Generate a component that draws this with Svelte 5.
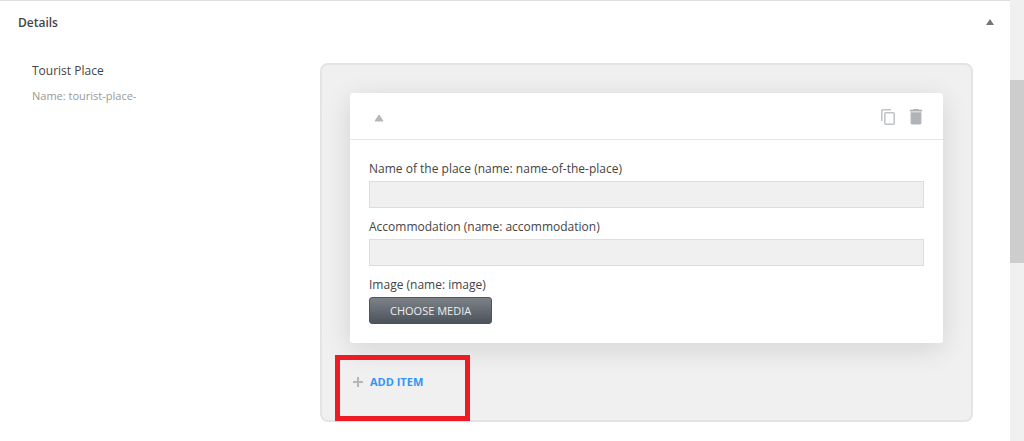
<script>
  let detailsOpen = $state(true);
  let itemOpen = $state(true);

  const fields = [
    { id: 'name-of-the-place', label: 'Name of the place' },
    { id: 'accommodation', label: 'Accommodation' },
  ];
</script>

<div class="page">
  <main>
    <header class="section-header">
      <h2>Details</h2>
      <button class="icon-button" aria-label="Toggle details" onclick={() => (detailsOpen = !detailsOpen)}>
        <svg width="10" height="10" viewBox="0 0 10 10"><path d="M5 2 L9 8 H1 Z" fill="#72777c" /></svg>
      </button>
    </header>

    {#if detailsOpen}
      <section class="row">
        <div class="info">
          <h3>Tourist Place</h3>
          <p>Name: tourist-place-</p>
        </div>

        <div class="repeater">
          <div class="card">
            <div class="card-header">
              <button class="icon-button" aria-label="Toggle item" onclick={() => (itemOpen = !itemOpen)}>
                <svg width="20" height="20" viewBox="0 0 20 20"><path d="M10 8 L14 14 H6 Z" fill="#b4b7ba" stroke="#b4b7ba" stroke-linejoin="round" /></svg>
              </button>
              <div class="actions">
                <button class="icon-button" aria-label="Duplicate item">
                  <svg width="16" height="18" viewBox="0 0 16 18" fill="none" stroke="#bfc3c6" stroke-width="1.5">
                    <path d="M11 1.8 H3 Q1.8 1.8 1.8 3 V13" />
                    <rect x="4.8" y="4.8" width="9.4" height="11.4" rx="1" />
                  </svg>
                </button>
                <button class="icon-button" aria-label="Delete item">
                  <svg width="16" height="18" viewBox="0 0 16 18" fill="#b0b4b8">
                    <path d="M5.5 1 H10.5 L11.3 1.8 H14.2 V3.4 H1.8 V1.8 H4.7 Z" />
                    <path d="M2.6 4.2 H13.4 V15 Q13.4 16.5 11.9 16.5 H4.1 Q2.6 16.5 2.6 15 Z" />
                  </svg>
                </button>
              </div>
            </div>

            {#if itemOpen}
              <div class="card-body">
                {#each fields as field}
                  <div class="field">
                    <label for={field.id}>{field.label} (name: {field.id})</label>
                    <input id={field.id} type="text" />
                  </div>
                {/each}
                <div class="field">
                  <label for="image">Image (name: image)</label>
                  <button id="image" class="media">CHOOSE MEDIA</button>
                </div>
              </div>
            {/if}
          </div>

          <div class="footer">
            <button class="add">
              <svg width="10" height="10" viewBox="0 0 10 10"><path d="M5 0 V10 M0 5 H10" stroke="#b4b7ba" stroke-width="2" /></svg>
              ADD ITEM
            </button>
            <div class="highlight"></div>
          </div>
        </div>
      </section>
    {/if}
  </main>

  <div class="scrollbar" aria-hidden="true">
    <div class="thumb"></div>
  </div>
</div>

<style>
  :global(body) {
    margin: 0;
    background: #fff;
  }

  .page {
    display: flex;
    min-height: 100vh;
    font-family: 'Open Sans', 'Noto Sans', sans-serif;
    font-size: 12px;
    color: #444;
  }

  main {
    flex: 1;
    min-width: 0;
    border-top: 1px solid #ddd;
  }

  h2,
  h3,
  p {
    margin: 0;
  }

  button {
    font-family: inherit;
    cursor: pointer;
  }

  .icon-button {
    display: flex;
    padding: 0;
    border: none;
    background: none;
  }

  .section-header {
    display: flex;
    justify-content: space-between;
    align-items: center;
    height: 42px;
    padding: 0 15px 0 18px;
  }

  h2 {
    font-size: 12px;
    font-weight: 600;
  }

  .row {
    display: flex;
    padding: 20px 37px 20px 32px;
  }

  .info {
    width: 288px;
    flex-shrink: 0;
  }

  h3 {
    font-size: 12px;
    font-weight: 400;
    line-height: 16px;
  }

  .info p {
    margin-top: 9px;
    font-size: 11px;
    line-height: 16px;
    color: #999;
  }

  .repeater {
    flex: 1;
    min-width: 0;
    padding: 28px;
    padding-bottom: 0;
    border: 2px solid #e4e4e4;
    border-radius: 8px;
    background: #f0f0f0;
  }

  .card {
    border-radius: 3px;
    background: #fff;
    box-shadow: 0 6px 28px rgba(0, 0, 0, 0.12);
  }

  .card-header {
    display: flex;
    justify-content: space-between;
    align-items: center;
    height: 44px;
    padding: 2px 19px 0;
    border-bottom: 1px solid #e6e6e6;
  }

  .actions {
    display: flex;
    gap: 12px;
  }

  .card-body {
    display: flex;
    flex-direction: column;
    gap: 9px;
    padding: 19px;
  }

  .field {
    display: flex;
    flex-direction: column;
    align-items: flex-start;
  }

  label {
    line-height: 20px;
    padding-bottom: 2px;
  }

  input {
    box-sizing: border-box;
    width: 100%;
    height: 27px;
    padding: 0 8px;
    border: 1px solid #ddd;
    background: #f0f0f0;
    font-family: inherit;
  }

  .media {
    height: 27px;
    padding: 0 20px;
    border: 1px solid #4d535a;
    border-radius: 3px;
    background: linear-gradient(#7d8288, #4b535b);
    color: #eee;
    font-size: 11px;
  }

  .footer {
    position: relative;
    height: 77px;
  }

  .add {
    display: flex;
    align-items: center;
    gap: 7px;
    height: 77px;
    padding: 0 3px;
    border: none;
    background: none;
    color: #3294f8;
    font-size: 11px;
    font-weight: 700;
  }

  /* Marks the button that adds a row */
  .highlight {
    position: absolute;
    top: 12px;
    left: -15px;
    box-sizing: border-box;
    width: 135px;
    height: 66px;
    border: 5px solid #ed1c24;
    pointer-events: none;
  }

  .scrollbar {
    display: flex;
    flex-direction: column;
    width: 14px;
    background: #f0f0f0;
  }

  .scrollbar::before,
  .scrollbar::after {
    content: '';
    flex: 80;
  }

  .scrollbar::after {
    flex: 179;
  }

  .thumb {
    flex: 182;
    background: #cdcdcd;
  }
</style>
